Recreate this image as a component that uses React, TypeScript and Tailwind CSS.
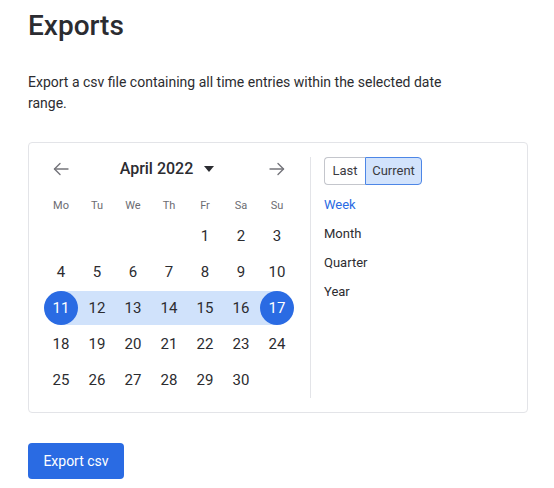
import React from "react";

const weekdays = ["Mo", "Tu", "We", "Th", "Fr", "Sa", "Su"];
const cells: (number | null)[] = [null, null, null, null, ...Array.from({ length: 30 }, (_, i) => i + 1)];

function DateCell({ d }: { d: number | null }) {
  if (d === null) return <div className="h-[36px] w-[36px]" />;
  const start = d === 11;
  const end = d === 17;
  const inRange = d >= 11 && d <= 17;
  return (
    <div className="relative flex h-[36px] w-[36px] items-center justify-center">
      {inRange && !start && !end && <div className="absolute inset-x-0 top-[1px] bottom-[1px] bg-[#d0e2fb]" />}
      {start && <div className="absolute left-1/2 right-0 top-[1px] bottom-[1px] bg-[#d0e2fb]" />}
      {end && <div className="absolute left-0 right-1/2 top-[1px] bottom-[1px] bg-[#d0e2fb]" />}
      {start || end ? (
        <div className="relative flex h-[34px] w-[34px] items-center justify-center rounded-full bg-[#2a6be3] text-white">
          {d}
        </div>
      ) : (
        <span className="relative">{d}</span>
      )}
    </div>
  );
}

function Arrow({ dir }: { dir: "left" | "right" }) {
  return (
    <svg width="18" height="18" viewBox="0 0 18 18" fill="none" stroke="#74747a" strokeWidth="1.4" strokeLinecap="round" strokeLinejoin="round">
      {dir === "left" ? (
        <>
          <path d="M16 9H2.5" />
          <path d="M8 3.5L2.5 9L8 14.5" />
        </>
      ) : (
        <>
          <path d="M2 9H15.5" />
          <path d="M10 3.5L15.5 9L10 14.5" />
        </>
      )}
    </svg>
  );
}

export default function App() {
  return (
    <div className="px-[28px] pt-[8px] font-['Roboto',sans-serif] text-[#2c2c30]">
      <h1 className="text-[28px] leading-[36px] font-medium text-[#2b2c31]">Exports</h1>
      <p className="mt-[28px] max-w-[420px] text-[14px] leading-[21px] text-[#2c2c30]">
        Export a csv file containing all time entries within the selected date range.
      </p>
      <div className="mt-[28px] flex w-[500px] rounded-[4px] border border-[#e3e4e8] p-[14px]">
        <div className="w-[252px]">
          <div className="flex h-[24px] items-center">
            <div className="flex w-[36px] justify-center">
              <Arrow dir="left" />
            </div>
            <div className="flex flex-1 items-center justify-center gap-[11px] pr-[4px]">
              <span className="text-[16px] font-medium text-[#2b2c31]">April 2022</span>
              <svg width="10" height="6" viewBox="0 0 10 6">
                <path d="M0 0H10L5 6Z" fill="#2b2c31" />
              </svg>
            </div>
            <div className="flex w-[36px] justify-center">
              <Arrow dir="right" />
            </div>
          </div>
          <div className="mt-[13px] grid h-[24px] grid-cols-7 items-center text-[11px] text-[#6c6c72]">
            {weekdays.map((w) => (
              <div key={w} className="text-center">
                {w}
              </div>
            ))}
          </div>
          <div className="grid grid-cols-7 text-[15px]">
            {cells.map((d, i) => (
              <DateCell key={i} d={d} />
            ))}
          </div>
        </div>
        <div className="ml-[15px] w-px self-stretch bg-[#e3e4e8]" />
        <div className="ml-[13px] flex flex-col text-[13px]">
          <div className="flex h-[28px]">
            <button className="w-[41px] rounded-l-[4px] border border-r-0 border-[#c4c6cc] bg-white text-[#3a3a3f]">Last</button>
            <button className="w-[57px] rounded-r-[4px] border border-[#4d86e6] bg-[#d2e3fc] text-[#3a3a3f]">Current</button>
          </div>
          <div className="mt-[5px] flex h-[29px] items-center text-[#2a6be3]">Week</div>
          <div className="flex h-[29px] items-center">Month</div>
          <div className="flex h-[29px] items-center">Quarter</div>
          <div className="flex h-[29px] items-center">Year</div>
        </div>
      </div>
      <button className="mt-[30px] flex h-[36px] w-[96px] items-center justify-center rounded-[4px] bg-[#2a6be3] text-[14px] text-white">
        Export csv
      </button>
    </div>
  );
}
